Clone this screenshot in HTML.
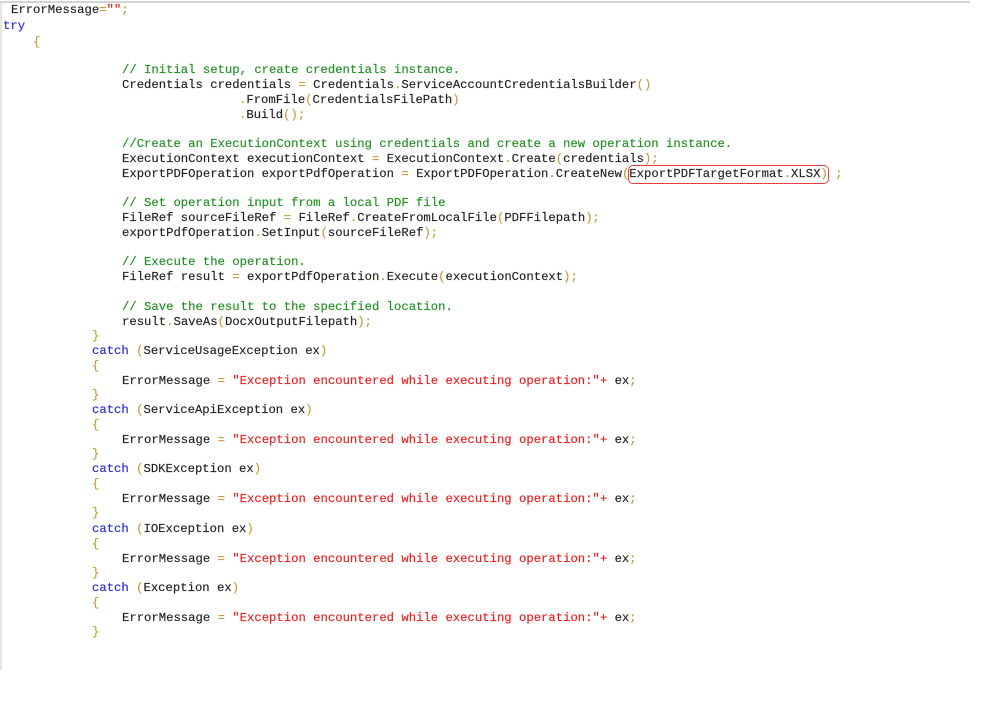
<!DOCTYPE html>
<html><head><meta charset="utf-8"><style>
body{margin:0;width:999px;height:702px;background:#fff;position:relative;overflow:hidden}
.t{position:absolute;top:1px;left:0;width:970px;height:2px;background:#d4d4d4}
.l{position:absolute;top:3px;left:0;width:2px;height:667px;background:#e6e6e6}
.c{position:absolute;font-family:"Liberation Mono",monospace;font-size:12.25px;line-height:14px;color:#222;white-space:pre;-webkit-text-stroke:0.15px currentColor}
.k{color:#2a2ad0}.g{color:#209020}.s{color:#ee1c1c}.p{color:#c89a38}
.box{position:absolute;left:628px;top:165px;width:199px;height:17px;border:1.5px solid #e04040;border-radius:5px}
</style></head><body>
<div class="t"></div><div class="l"></div>
<div class="c" style="left:11px;top:3px">ErrorMessage<span class="p">=</span><span class="s">""</span><span class="p">;</span></div>
<div class="c k" style="left:3px;top:19px">try</div>
<div class="c p" style="left:33px;top:35px">{</div>
<div class="c g" style="left:122px;top:63px">// Initial setup, create credentials instance.</div>
<div class="c" style="left:122px;top:78px">Credentials credentials <span class="p">=</span> Credentials<span class="p">.</span>ServiceAccountCredentialsBuilder<span class="p">()</span></div>
<div class="c" style="left:239px;top:93px"><span class="p">.</span>FromFile<span class="p">(</span>CredentialsFilePath<span class="p">)</span></div>
<div class="c" style="left:239px;top:108px"><span class="p">.</span>Build<span class="p">();</span></div>
<div class="c g" style="left:122px;top:137px">//Create an ExecutionContext using credentials and create a new operation instance.</div>
<div class="c" style="left:122px;top:152px">ExecutionContext executionContext <span class="p">=</span> ExecutionContext<span class="p">.</span>Create<span class="p">(</span>credentials<span class="p">);</span></div>
<div class="c" style="left:122px;top:167px">ExportPDFOperation exportPdfOperation <span class="p">=</span> ExportPDFOperation<span class="p">.</span>CreateNew<span class="p">(</span>ExportPDFTargetFormat<span class="p">.</span>XLSX<span class="p">)</span> <span class="p">;</span></div>
<div class="box"></div>
<div class="c g" style="left:122px;top:196px">// Set operation input from a local PDF file</div>
<div class="c" style="left:122px;top:211px">FileRef sourceFileRef <span class="p">=</span> FileRef<span class="p">.</span>CreateFromLocalFile<span class="p">(</span>PDFFilepath<span class="p">);</span></div>
<div class="c" style="left:122px;top:226px">exportPdfOperation<span class="p">.</span>SetInput<span class="p">(</span>sourceFileRef<span class="p">);</span></div>
<div class="c g" style="left:122px;top:255px">// Execute the operation.</div>
<div class="c" style="left:122px;top:270px">FileRef result <span class="p">=</span> exportPdfOperation<span class="p">.</span>Execute<span class="p">(</span>executionContext<span class="p">);</span></div>
<div class="c g" style="left:122px;top:300px">// Save the result to the specified location.</div>
<div class="c" style="left:122px;top:315px">result<span class="p">.</span>SaveAs<span class="p">(</span>DocxOutputFilepath<span class="p">);</span></div>
<div class="c p" style="left:92px;top:329px">}</div>

<div class="c" style="left:92px;top:344px"><span class="k">catch</span> <span class="p">(</span>ServiceUsageException ex<span class="p">)</span></div>
<div class="c p" style="left:92px;top:359px">{</div>
<div class="c" style="left:122px;top:374px">ErrorMessage <span class="p">=</span> <span class="s">"Exception encountered while executing operation:"+</span> ex<span class="p">;</span></div>
<div class="c p" style="left:92px;top:388px">}</div>

<div class="c" style="left:92px;top:403px"><span class="k">catch</span> <span class="p">(</span>ServiceApiException ex<span class="p">)</span></div>
<div class="c p" style="left:92px;top:418px">{</div>
<div class="c" style="left:122px;top:433px">ErrorMessage <span class="p">=</span> <span class="s">"Exception encountered while executing operation:"+</span> ex<span class="p">;</span></div>
<div class="c p" style="left:92px;top:447px">}</div>

<div class="c" style="left:92px;top:462px"><span class="k">catch</span> <span class="p">(</span>SDKException ex<span class="p">)</span></div>
<div class="c p" style="left:92px;top:477px">{</div>
<div class="c" style="left:122px;top:492px">ErrorMessage <span class="p">=</span> <span class="s">"Exception encountered while executing operation:"+</span> ex<span class="p">;</span></div>
<div class="c p" style="left:92px;top:506px">}</div>

<div class="c" style="left:92px;top:522px"><span class="k">catch</span> <span class="p">(</span>IOException ex<span class="p">)</span></div>
<div class="c p" style="left:92px;top:537px">{</div>
<div class="c" style="left:122px;top:552px">ErrorMessage <span class="p">=</span> <span class="s">"Exception encountered while executing operation:"+</span> ex<span class="p">;</span></div>
<div class="c p" style="left:92px;top:566px">}</div>

<div class="c" style="left:92px;top:581px"><span class="k">catch</span> <span class="p">(</span>Exception ex<span class="p">)</span></div>
<div class="c p" style="left:92px;top:596px">{</div>
<div class="c" style="left:122px;top:611px">ErrorMessage <span class="p">=</span> <span class="s">"Exception encountered while executing operation:"+</span> ex<span class="p">;</span></div>
<div class="c p" style="left:92px;top:625px">}</div>
</body></html>
